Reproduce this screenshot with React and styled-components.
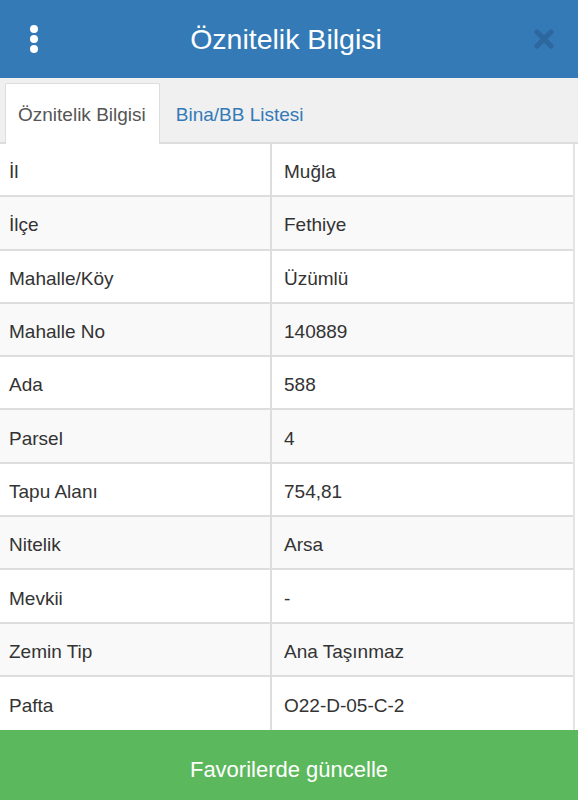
import React from 'react';
import styled, { createGlobalStyle } from 'styled-components';

const GlobalStyle = createGlobalStyle`
  html, body { margin: 0; padding: 0; background: #fff; }
  body, button { font-family: "Liberation Sans", Arial, Helvetica, sans-serif; }
`;

const Page = styled.div`
  width: 578px;
  height: 800px;
  display: flex;
  flex-direction: column;
  overflow: hidden;
`;

const Header = styled.header`
  height: 78px;
  background: #337ab7;
  display: flex;
  align-items: center;
  justify-content: space-between;
  padding: 0 22px 0 28px;
  box-sizing: border-box;
  flex-shrink: 0;
`;

const Title = styled.h1`
  margin: 0;
  flex: 1;
  text-align: center;
  font-size: 28.5px;
  font-weight: normal;
  color: #fff;
`;

const MenuBtn = styled.div`
  width: 12px;
  display: flex;
  flex-direction: column;
  align-items: center;
  gap: 2px;
`;

const Dot = styled.span`
  width: 8px;
  height: 8px;
  border-radius: 50%;
  background: #fff;
`;

const Close = styled.div`
  width: 24px;
  height: 24px;
  display: flex;
  align-items: center;
  justify-content: center;
`;

const Tabs = styled.nav`
  height: 66px;
  background: #f0f0f0;
  display: flex;
  align-items: flex-end;
  padding-left: 5px;
  border-bottom: 2px solid #ddd;
  box-sizing: border-box;
  flex-shrink: 0;
`;

const Tab = styled.div`
  height: 61px;
  margin-bottom: -2px;
  padding: 2px 13px 0 12px;
  display: flex;
  align-items: center;
  font-size: 19px;
  box-sizing: border-box;
  color: ${p => (p.$active ? '#555' : '#337ab7')};
  background: ${p => (p.$active ? '#fff' : 'transparent')};
  border: 1px solid ${p => (p.$active ? '#ddd' : 'transparent')};
  border-bottom: none;
  border-radius: 2px 2px 0 0;
  margin-right: ${p => (p.$active ? '3px' : '0')};
`;

const Table = styled.div`
  flex: 1;
  display: flex;
  flex-direction: column;
  border-right: 2px solid #e4e4e4;
  margin-right: 3px;
`;

const Row = styled.div`
  height: 53.3px;
  display: grid;
  grid-template-columns: 270px 1fr;
  border-bottom: 2px solid #ddd;
  box-sizing: border-box;
  background: ${p => (p.$striped ? '#f9f9f9' : '#fff')};
  &:last-child { border-bottom: none; }
`;

const Cell = styled.div`
  display: flex;
  align-items: center;
  padding-top: 5px;
  padding-left: ${p => (p.$value ? '12px' : '9px')};
  font-size: 19px;
  color: #333;
  border-left: ${p => (p.$value ? '2px solid #ddd' : 'none')};
`;

const SaveButton = styled.button`
  height: 70px;
  flex-shrink: 0;
  border: none;
  background: #5cb85c;
  color: #fff;
  font-size: 22px;
  padding: 10px 0 0;
  display: flex;
  align-items: center;
  justify-content: center;
`;

const rows = [
  ['İl', 'Muğla'],
  ['İlçe', 'Fethiye'],
  ['Mahalle/Köy', 'Üzümlü'],
  ['Mahalle No', '140889'],
  ['Ada', '588'],
  ['Parsel', '4'],
  ['Tapu Alanı', '754,81'],
  ['Nitelik', 'Arsa'],
  ['Mevkii', '-'],
  ['Zemin Tip', 'Ana Taşınmaz'],
  ['Pafta', 'O22-D-05-C-2'],
];

export default function App() {
  return (
    <Page>
      <GlobalStyle />
      <Header>
        <MenuBtn>
          <Dot />
          <Dot />
          <Dot />
        </MenuBtn>
        <Title>Öznitelik Bilgisi</Title>
        <Close>
          <svg width="20" height="20" viewBox="0 0 20 20">
            <path d="M3 3 L17 17 M17 3 L3 17" stroke="#2d679e" strokeWidth="5" strokeLinecap="round" />
          </svg>
        </Close>
      </Header>
      <Tabs>
        <Tab $active>Öznitelik Bilgisi</Tab>
        <Tab>Bina/BB Listesi</Tab>
      </Tabs>
      <Table>
        {rows.map(([k, v], i) => (
          <Row key={k} $striped={i % 2 === 1}>
            <Cell>{k}</Cell>
            <Cell $value>{v}</Cell>
          </Row>
        ))}
      </Table>
      <SaveButton>Favorilerde güncelle</SaveButton>
    </Page>
  );
}
